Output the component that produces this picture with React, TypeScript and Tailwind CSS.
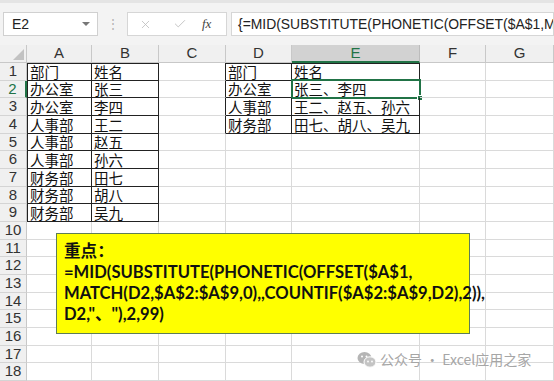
import { X, Check } from "lucide-react";

const cols = ["A", "B", "C", "D", "E", "F", "G"];
const colW = ["w-[65px]", "w-[67px]", "w-[67px]", "w-[66px]", "w-[128px]", "w-[66px]", "w-[68px]"];

// sheet contents, keyed by row then column
const data: Record<number, string[]> = {
  1: ["部门", "姓名", "", "部门", "姓名"],
  2: ["办公室", "张三", "", "办公室", "张三、李四"],
  3: ["办公室", "李四", "", "人事部", "王二、赵五、孙六"],
  4: ["人事部", "王二", "", "财务部", "田七、胡八、吴九"],
  5: ["人事部", "赵五"],
  6: ["人事部", "孙六"],
  7: ["财务部", "田七"],
  8: ["财务部", "胡八"],
  9: ["财务部", "吴九"],
};

// cells with thin black borders
const boxed = (r: number, c: number) =>
  (r >= 1 && r <= 9 && c >= 0 && c <= 1) || (r >= 1 && r <= 4 && c >= 3 && c <= 4);

const rows = Array.from({ length: 18 }, (_, i) => i + 1);

const WeChat = () => (
  <svg width="20" height="18" viewBox="0 0 20 18">
    <ellipse cx="7.5" cy="7" rx="7" ry="6" fill="#b5b5b5" />
    <ellipse cx="13" cy="11" rx="6" ry="5.2" fill="#c4c4c4" stroke="#fff" strokeWidth="1" />
    <circle cx="5" cy="5.5" r="1" fill="#fff" />
    <circle cx="9.5" cy="5.5" r="1" fill="#fff" />
    <circle cx="11" cy="10.5" r="0.9" fill="#fff" />
    <circle cx="15" cy="10.5" r="0.9" fill="#fff" />
  </svg>
);

const App = () => {
  return (
    <div className="relative w-[554px] h-[381px] overflow-hidden bg-white" style={{ fontFamily: '"Liberation Sans", "Noto Sans CJK SC", sans-serif' }}>
      {/* formula bar */}
      <div className="h-[45px] bg-[#f3f3f3] border-t-[3px] border-[#e4e4e4] flex items-center">
        <div className="ml-[3px] w-[95px] h-[24px] bg-white border border-[#d0d0d0] flex items-center justify-between pl-[8px] pr-[7px] text-[14px] text-[#222]">
          <span>E2</span>
          <span className="w-0 h-0 border-l-[4px] border-r-[4px] border-t-[4px] border-l-transparent border-r-transparent border-t-[#777]" />
        </div>
        <div className="w-[29px] text-center text-[#b0b0b0] text-[12px]">⋮</div>
        <div className="w-[100px] h-[24px] bg-white border border-[#d6d6d6] flex items-center">
          <X className="ml-[11px] w-[13px] h-[13px] text-[#bdbdbd]" strokeWidth={1.5} />
          <Check className="ml-[21px] w-[14px] h-[14px] text-[#bdbdbd]" strokeWidth={1.5} />
          <span className="ml-[15px] text-[13px] italic text-[#444]" style={{ fontFamily: '"Liberation Serif", serif' }}>fx</span>
        </div>
        <div className="ml-[4px] flex-1 min-w-0 h-[24px] bg-white border border-[#d6d6d6] flex items-center pl-[6px] text-[13.9px] text-[#222] whitespace-nowrap overflow-hidden">
          <span>{"{=MID(SUBSTITUTE(PHONETIC(OFFSET($A$1,MAT"}</span>
        </div>
      </div>

      {/* column headers */}
      <div className="flex h-[18px] bg-[#f0f0f0] text-[15px] text-[#333]">
        <div className="w-[27px] border-r border-b border-[#c8c8c8] flex items-end justify-end pr-[2px] pb-[2px]">
          <svg width="11" height="11" viewBox="0 0 11 11">
            <polygon points="11,0 11,11 0,11" fill="#c2c2c2" />
          </svg>
        </div>
        {cols.map((c, i) => (
          <div
            key={c}
            className={`${colW[i]} flex items-center justify-center border-r ${c === "E" ? "bg-[#d2d2d2] text-[#217346] border-b-2 border-b-[#217346] border-r-[#bcbcbc]" : "border-b border-[#c8c8c8]"}`}
          >
            {c}
          </div>
        ))}
      </div>

      {/* grid */}
      {rows.map((r) => (
        <div key={r} className="flex h-[17.67px]">
          <div
            className={`w-[27px] bg-[#f0f0f0] flex items-center justify-center text-[15px] border-b border-[#d4d4d4] ${r === 2 ? "text-[#217346] bg-[#e1e1e1] border-r-2 border-r-[#217346]" : "text-[#333] border-r border-r-[#c8c8c8]"}`}
          >
            {r}
          </div>
          {cols.map((c, i) => {
            const here = boxed(r, i);
            const rightDark = here || boxed(r, i + 1);
            const bottomDark = here || boxed(r + 1, i);
            const leftDark = i === 0 && here;
            const text = data[r]?.[i] ?? "";
            return (
              <div
                key={c}
                className={`${colW[i]} relative flex items-center pl-[2px] text-[14.5px] text-[#111] whitespace-nowrap border-r border-b ${rightDark ? "border-r-[#222]" : "border-r-[#dadada]"} ${bottomDark ? "border-b-[#222]" : "border-b-[#dadada]"} ${leftDark ? "border-l border-l-[#222] pl-[1px]" : ""} ${r === 1 && here ? "border-t border-t-[#222]" : ""}`}
                style={{ fontFamily: '"Noto Sans CJK SC", sans-serif' }}
              >
                {text && <span className="leading-[15px]">{text}</span>}
                {r === 2 && c === "E" && (
                  <div className="absolute -left-[1px] -top-[2px] -right-[2px] -bottom-[2px] border-2 border-[#217346]">
                    <div className="absolute -right-[4px] -bottom-[4px] w-[6px] h-[6px] bg-[#217346] border border-white" />
                  </div>
                )}
              </div>
            );
          })}
        </div>
      ))}

      {/* note shape */}
      <div
        className="absolute left-[56px] top-[233px] w-[414px] h-[101px] bg-[#ffff00] border border-[#5d7d57] pl-[7px] pt-[7px] text-[16.6px] font-bold text-[#111] leading-[21px]"
        style={{ fontFamily: 'Lato, "Noto Sans CJK SC", sans-serif' }}
      >
        <div>重点：</div>
        <div>=MID(SUBSTITUTE(PHONETIC(OFFSET($A$1,</div>
        <div>MATCH(D2,$A$2:$A$9,0),,COUNTIF($A$2:$A$9,D2),2)),</div>
        <div>D2,"、"),2,99)</div>
      </div>

      {/* watermark */}
      <div className="absolute left-[357px] top-[349px] flex items-center gap-[3px] text-[14px] text-[#a6a6a6]" style={{ fontFamily: '"Noto Sans CJK SC", sans-serif' }}>
        <WeChat />
        <span>公众号 · Excel应用之家</span>
      </div>
    </div>
  );
};

export default App;
